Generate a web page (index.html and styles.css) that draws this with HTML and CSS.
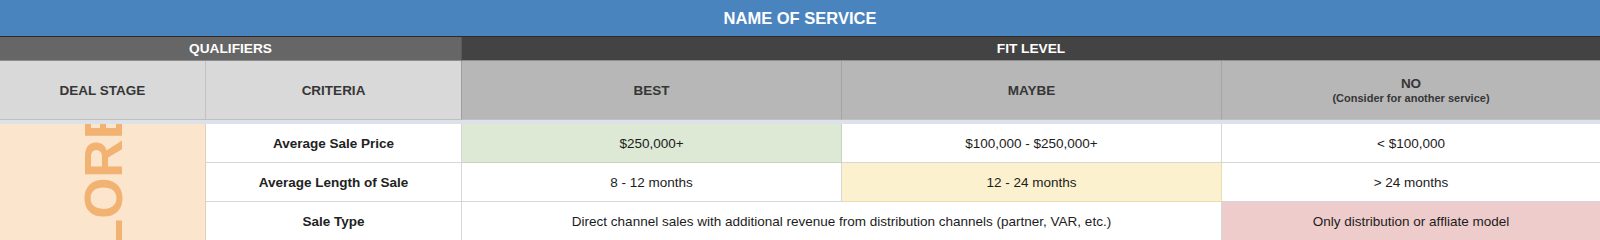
FILE: index.html
```html
<!DOCTYPE html>
<html lang="en">
<head>
<meta charset="utf-8">
<title>Name of Service</title>
<link rel="stylesheet" href="styles.css">
</head>
<body>
<div class="sheet">
  <div class="title">NAME OF SERVICE</div>
  <div class="group qual">QUALIFIERS</div>
  <div class="group fit">FIT LEVEL</div>
  <div class="head qh">DEAL STAGE</div>
  <div class="head qh last-q">CRITERIA</div>
  <div class="head fh">BEST</div>
  <div class="head fh">MAYBE</div>
  <div class="head fh no"><span>NO</span><span class="sub">(Consider for another service)</span></div>
  <div class="freeze"></div>
  <div class="stage"><span class="stage-text">EXPLORE</span></div>
  <div class="crit">Average Sale Price</div>
  <div class="val green">$250,000+</div>
  <div class="val">$100,000 - $250,000+</div>
  <div class="val end">&lt; $100,000</div>
  <div class="crit">Average Length of Sale</div>
  <div class="val">8 - 12 months</div>
  <div class="val yellow">12 - 24 months</div>
  <div class="val end">&gt; 24 months</div>
  <div class="crit">Sale Type</div>
  <div class="val wide">Direct channel sales with additional revenue from distribution channels (partner, VAR, etc.)</div>
  <div class="val red end">Only distribution or affliate model</div>
</div>
</body>
</html>
```

FILE: styles.css
```css
* { box-sizing: border-box; }

html, body {
  margin: 0;
  padding: 0;
  background: #ffffff;
}

body {
  font-family: "Liberation Sans", Arial, sans-serif;
  font-size: 13.5px;
  color: #222222;
}

.sheet {
  display: grid;
  grid-template-columns: 206px 256px 380px 380px 378px;
  grid-template-rows: 37px 24px 59px 4px 39px 39px 39px;
  width: 1600px;
  overflow: hidden;
}

.sheet > div {
  display: flex;
  align-items: center;
  justify-content: center;
  text-align: center;
}

.title {
  grid-column: 1 / -1;
  background: #4a84bf;
  border-bottom: 1px solid #2f2b20;
  color: #ffffff;
  font-weight: bold;
  font-size: 16.5px;
}

.group {
  color: #ffffff;
  font-weight: bold;
  font-size: 13.7px;
  border-bottom: 1px solid #8e8e8e;
}

.qual {
  grid-column: 1 / 3;
  background: #666666;
  border-right: 1px solid #5a5a5a;
}

.fit {
  grid-column: 3 / 6;
  background: #434343;
}

.head {
  font-weight: bold;
  color: #363636;
  border-bottom: 1px solid #c0c0c0;
  border-right: 1px solid #c2c2c2;
}

.qh { background: #d9d9d9; }
.qh.last-q { border-right-color: #9e9e9e; }
.fh { background: #b7b7b7; border-right-color: #a4a4a4; }
.fh.no { border-right: none; }

.no {
  flex-direction: column;
  line-height: 16px;
}

.no .sub {
  font-size: 11px;
  line-height: 13px;
}

.freeze {
  grid-column: 1 / -1;
  background: #dde2ea;
}

.stage {
  grid-row: 5 / 8;
  background: #fce5cd;
  border-right: 1px solid #e6ceb4;
  overflow: hidden;
  align-items: flex-start !important;
}

.stage-text {
  writing-mode: vertical-rl;
  transform: rotate(180deg);
  font-size: 53px;
  line-height: 53px;
  font-weight: bold;
  color: #f2b272;
  margin-top: -20px;
  margin-left: 1px;
  flex-shrink: 0;
  white-space: nowrap;
}

.crit {
  font-weight: bold;
  color: #222222;
  border-right: 1px solid #d6d6d6;
  border-bottom: 1px solid #d6d6d6;
}

.val {
  color: #1c1c1c;
  border-right: 1px solid #d6d6d6;
  border-bottom: 1px solid #d6d6d6;
}

.val.end {
  border-right: none;
}

.green {
  background: #dde8d5;
  border-color: #c6d4bd;
}

.yellow {
  background: #fcf1cf;
  border-color: #e9dcae;
}

.red {
  background: #eecccb;
  border-color: #d9b7b6;
}

.wide {
  grid-column: 3 / 5;
}
```
